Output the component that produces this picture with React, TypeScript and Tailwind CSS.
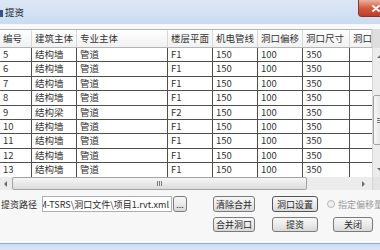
import React from "react";

const COLS = "grid grid-cols-[32px_45px_91px_45px_45px_45px_47px_22px]";
const headers = ["编号", "建筑主体", "专业主体", "楼层平面", "机电管线", "洞口偏移", "洞口尺寸", "洞口"];
const rows = [5, 6, 7, 8, 9, 10, 11, 12, 13].map((n) => [
  String(n),
  n === 9 ? "结构梁" : "结构墙",
  "管道",
  n === 9 ? "F2" : "F1",
  "150",
  "100",
  "350",
  "",
]);

function Btn({ children, className = "" }: { children: React.ReactNode; className?: string }) {
  return (
    <div
      className={`flex shrink-0 items-center justify-center rounded-[3px] border border-[#7a7a7a] bg-gradient-to-b from-[#f7f7f7] via-[#ebebeb] to-[#d9d9d9] text-[9px] leading-none text-[#2a2a2a] ${className}`}
    >
      {children}
    </div>
  );
}

function Tri({ dir }: { dir: "up" | "down" | "left" | "right" }) {
  const pts =
    dir === "up" ? "0,4 3,1 6,4" : dir === "down" ? "0,1 3,4 6,1" : dir === "left" ? "4,0 1,3 4,6" : "1,0 4,3 1,6";
  const w = dir === "up" || dir === "down" ? 6 : 5;
  const h = dir === "up" || dir === "down" ? 5 : 6;
  return (
    <svg width={w} height={h} viewBox={`0 0 ${w} ${h}`}>
      <polygon points={pts} fill="#6b6b6b" />
    </svg>
  );
}

export default function App() {
  return (
    <div className="w-[380px] h-[250px] overflow-hidden bg-white font-['Noto_Sans_CJK_SC',sans-serif]">
      {/* Title bar */}
      <div className="flex h-[24px] bg-gradient-to-b from-[#dde8f6] to-[#cadcf1]">
        <div className="mt-[10px] h-[7px] w-[3px] bg-[#2f5486]" />
        <span className="ml-[2px] mt-[6px] text-[9.5px] leading-[12px] text-[#1b2633]">提资</span>
        <div className="ml-auto -mr-[13px] flex h-[17px] w-[35px] shrink-0 items-center justify-center rounded-b-[4px] border border-t-0 border-[#8e3424] bg-gradient-to-b from-[#eab0a2] via-[#d25b43] to-[#c13d25]">
          <svg width="8" height="7" viewBox="0 0 8 7">
            <path d="M1 1 L7 6 M7 1 L1 6" stroke="#ffffff" strokeWidth="1.8" strokeLinecap="round" />
          </svg>
        </div>
      </div>
      <div className="h-[5px] bg-[#f7f9fc]" />

      {/* Grid */}
      <div className="flex h-[161px]">
        <div className="flex w-[372px] shrink-0 flex-col">
          <div className={`${COLS} h-[19px] border-t border-b border-[#b5b5b5] bg-gradient-to-b from-[#ffffff] to-[#f1f1f1]`}>
            {headers.map((h, i) => (
              <div
                key={i}
                className="overflow-hidden whitespace-nowrap border-r border-[#d8d8d8] pl-[3px] text-[9.5px] leading-[17px] text-[#333]"
              >
                {h}
              </div>
            ))}
          </div>
          <div className="h-[129px] overflow-hidden bg-white">
            {rows.map((r, ri) => (
              <div key={ri} className={`${COLS} h-[14.4px]`}>
                {r.map((c, ci) => (
                  <div
                    key={ci}
                    className={`overflow-hidden whitespace-nowrap border-b border-[#4f4f4f] pl-[3px] text-[9.5px] leading-[13px] text-[#333] ${
                      ci < 7 ? "border-r" : ""
                    }`}
                  >
                    {c}
                  </div>
                ))}
              </div>
            ))}
          </div>
          {/* horizontal scrollbar */}
          <div className="flex h-[13px] bg-[#ececec]">
            <div className="flex w-[10px] items-center justify-center">
              <Tri dir="left" />
            </div>
            <div className="ml-[2px] flex w-[295px] items-center justify-center rounded-[2px] border border-[#a3a3a3] bg-gradient-to-b from-[#f6f6f6] to-[#dcdcdc]">
              <div className="flex gap-[1px]">
                <div className="h-[5px] w-[1px] bg-[#777]" />
                <div className="h-[5px] w-[1px] bg-[#777]" />
                <div className="h-[5px] w-[1px] bg-[#777]" />
              </div>
            </div>
            <div className="flex-1" />
            <div className="flex w-[17px] items-center justify-center">
              <Tri dir="right" />
            </div>
          </div>
        </div>
        {/* vertical scrollbar */}
        <div className="flex w-[14px] shrink-0 flex-col border-l border-[#d6d6d6]">
          <div className="h-[19px] bg-[#dedede]" />
          <div className="flex h-[16px] items-center justify-center bg-[#ececec]">
            <Tri dir="up" />
          </div>
          <div className="h-[31px] bg-[#ececec]" />
          <div className="flex h-[50px] items-center justify-center rounded-[2px] border border-[#a3a3a3] bg-gradient-to-r from-[#f6f6f6] to-[#dcdcdc]">
            <div className="flex flex-col gap-[1px]">
              <div className="h-[1px] w-[5px] bg-[#777]" />
              <div className="h-[1px] w-[5px] bg-[#777]" />
              <div className="h-[1px] w-[5px] bg-[#777]" />
            </div>
          </div>
          <div className="h-[17px] bg-[#ececec]" />
          <div className="flex h-[15px] items-center justify-center bg-[#ececec]">
            <Tri dir="down" />
          </div>
          <div className="h-[13px] bg-[#e4e4e4]" />
        </div>
      </div>

      {/* Bottom panel */}
      <div className="h-[53px] bg-[#f7f7f7] pt-[6px]">
        <div className="flex h-[16px] items-center">
          <div className="w-[40px] shrink-0 whitespace-nowrap pl-[1px] text-[9px] leading-none text-[#2a2a2a]">提资路径</div>
          <div className="ml-[2px] flex h-[16px] w-[130px] shrink-0 items-center justify-end overflow-hidden border border-[#abadb3] bg-white pr-[2px]">
            <span className="whitespace-nowrap text-[9px] leading-none text-[#2a2a2a]">D:\BIM-TSRS\洞口文件\项目1.rvt.xml</span>
          </div>
          <Btn className="ml-[1px] h-[16px] w-[14px]">...</Btn>
          <Btn className="ml-[26px] h-[16px] w-[42px]">清除合并</Btn>
          <Btn className="ml-[17px] h-[16px] w-[46px] border-[#555]">洞口设置</Btn>
          <div className="ml-[9px] h-[8px] w-[8px] shrink-0 rounded-full border border-[#b5b5b5] bg-[#f0f0f0]" />
          <span className="ml-[3px] whitespace-nowrap text-[9px] leading-none text-[#9a9a9a]">指定偏移量</span>
        </div>
        <div className="mt-[5px] flex h-[15px]">
          <Btn className="ml-[213px] h-[15px] w-[42px]">合并洞口</Btn>
          <Btn className="ml-[17px] h-[15px] w-[46px]">提资</Btn>
          <Btn className="ml-[15px] h-[15px] w-[40px]">关闭</Btn>
        </div>
      </div>
      <div className="h-[7px] border-t border-[#8eabd2] bg-gradient-to-b from-[#cadbf0] to-[#dbe7f6]" />
    </div>
  );
}
